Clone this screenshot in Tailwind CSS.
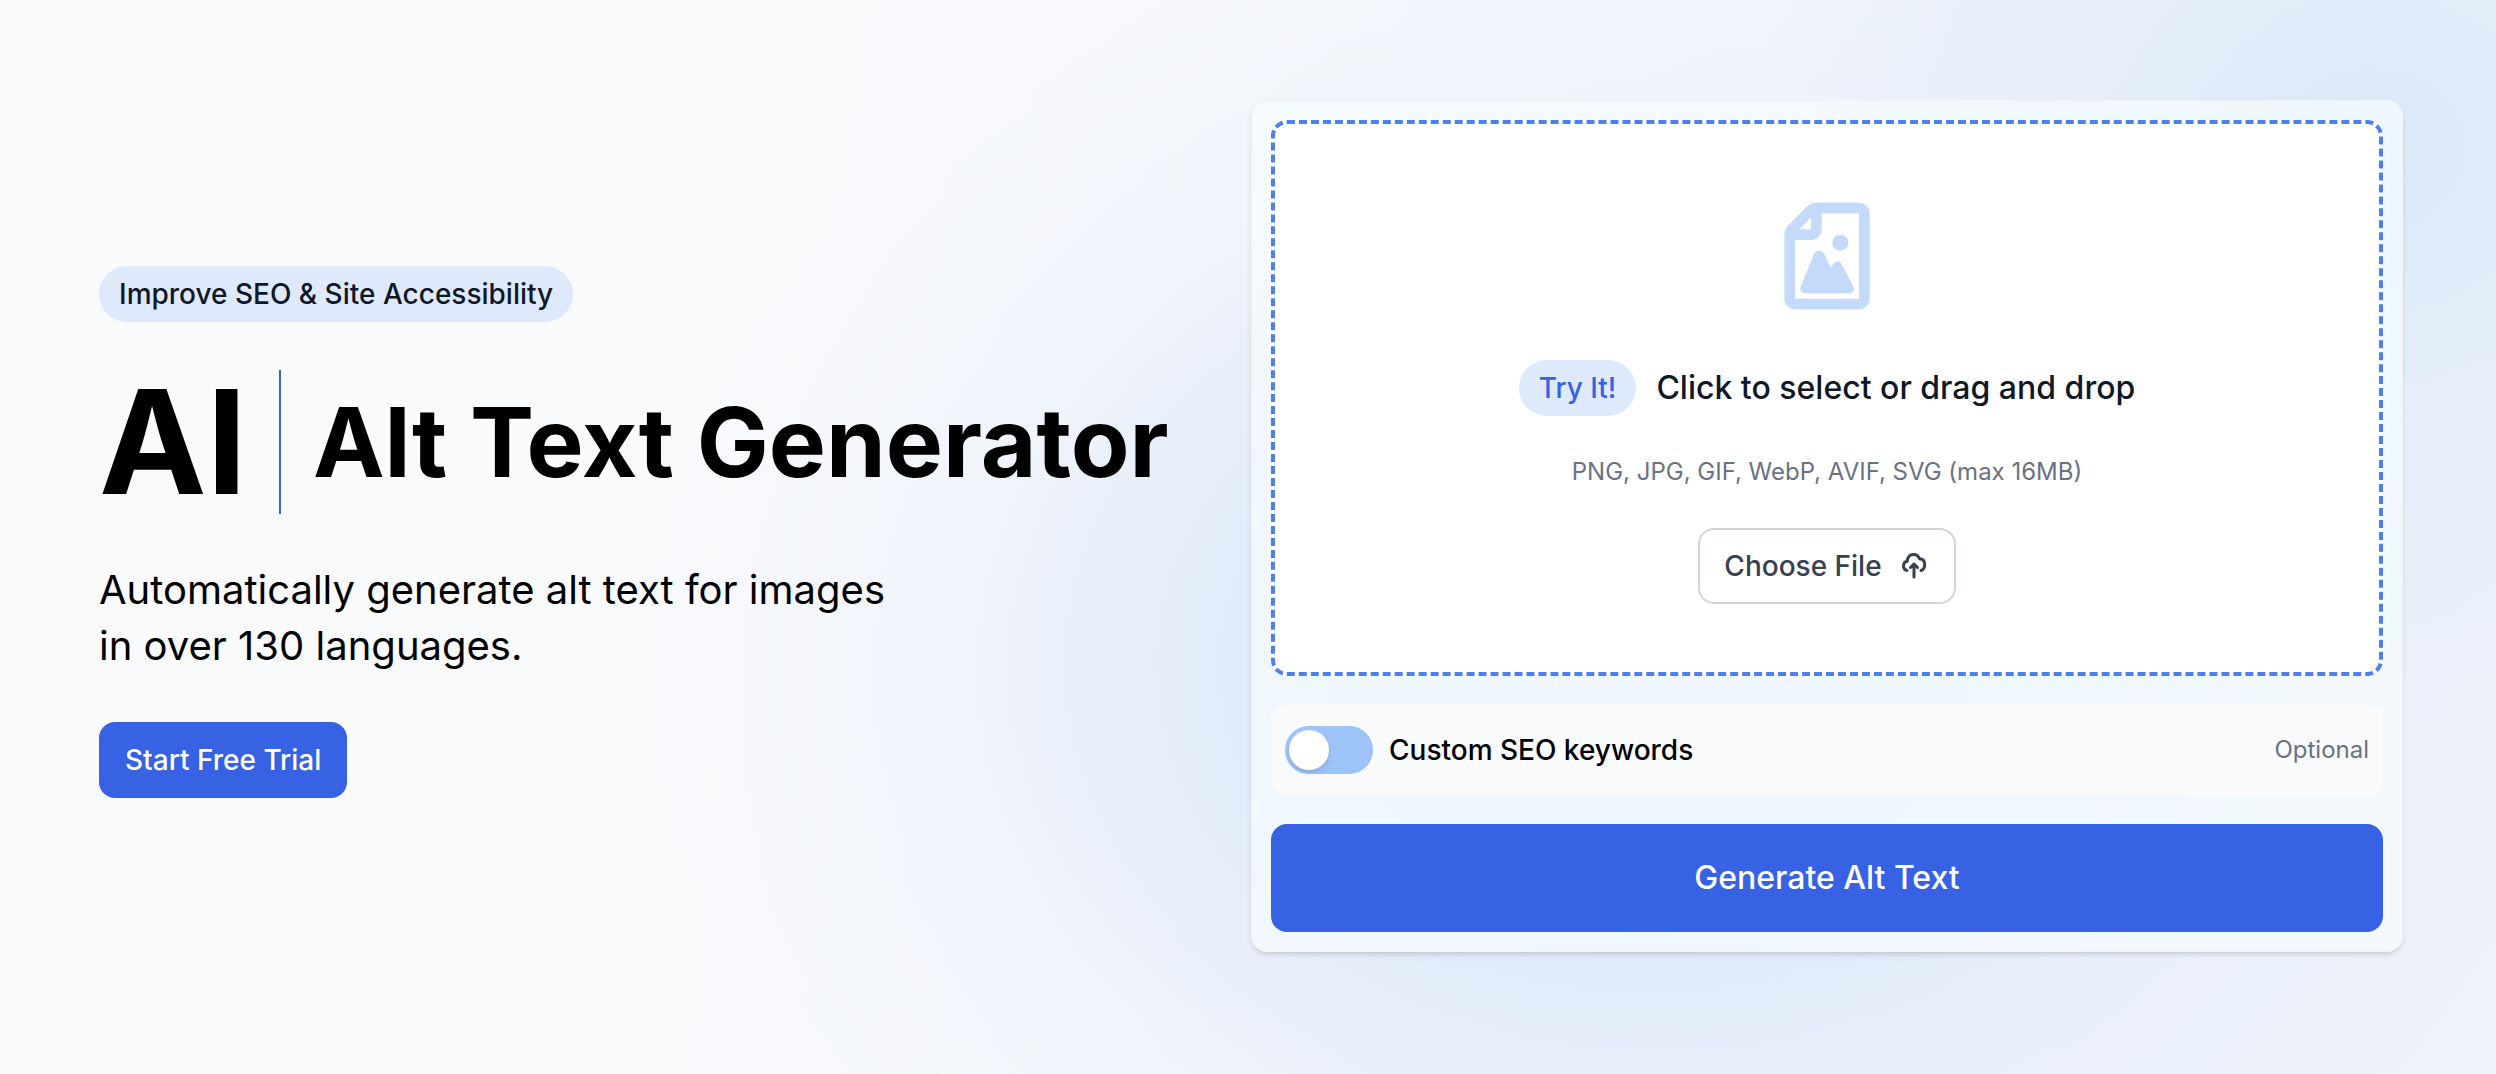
<!DOCTYPE html>
<html lang="en">
<head>
    <meta charset="UTF-8">
    <meta name="viewport" content="width=device-width, initial-scale=1.0">
    <title>AI Alt Text Generator</title>
    <script src="https://cdn.jsdelivr.net/npm/@tailwindcss/browser@4"></script>
</head>
<body class="bg-[#f9fafc] font-['Inter',sans-serif] text-black">
    <main class="min-h-screen pt-[100px] pb-[122px] pl-[99px] pr-[93px] bg-[radial-gradient(ellipse_620px_540px_at_95%_14%,#dae9f8_0%,#e0ebf9a0_45%,#e6eefa00_100%),radial-gradient(ellipse_1000px_760px_at_66%_62%,#dee9f8_0%,#e1ebf9_42%,#eaf0fa90_68%,#f9fafc00_100%),linear-gradient(100deg,#f9fafc_32%,#edf2fb_85%)]">
        <div class="grid grid-cols-2 items-center">
            <!-- Intro -->
            <section class="flex flex-col items-start gap-12 pt-3">
                <p class="rounded-full bg-[#dee9fc] px-5 py-2 text-[28px] leading-10 font-medium text-gray-900">Improve SEO &amp; Site Accessibility</p>
                <h1 class="flex items-center font-bold whitespace-nowrap">
                    <span class="border-r-2 border-[#3662e3] pr-8 text-[144px] leading-[144px]">AI</span>
                    <span class="pl-8 text-8xl leading-[96px]">Alt Text Generator</span>
                </h1>
                <p class="text-[40px] leading-14">Automatically generate alt text for images<br>in over 130 languages.</p>
                <a href="#" class="rounded-2xl bg-[#3662e3] px-[26px] py-[18px] text-[28px] leading-10 font-medium text-white hover:bg-blue-700">Start Free Trial</a>
            </section>

            <!-- Upload card -->
            <form class="flex flex-col gap-7 rounded-2xl border-2 border-gray-100 bg-[#f8fdff]/65 p-[18px] shadow-md">
                <div class="flex flex-col items-center gap-10 rounded-2xl border-4 border-dashed border-[#4d80ee] bg-white py-[68px]">
                    <svg class="size-32 text-[#c4dafb]" viewBox="0 0 24 24" fill="currentColor" aria-hidden="true">
                        <path fill-rule="evenodd" d="M18 2a2 2 0 0 1 2 2v16a2 2 0 0 1-2 2H6a2 2 0 0 1-2-2V7.830a2 2 0 0 1 .590-1.420l3.820-3.820A2 2 0 0 1 9.830 2zm0 2h-7v3a2 2 0 0 1-2 2H6v11h12zM9 4.830 6.830 7H9z"/>
                        <path d="M9.550 11.650c.4-.87 1.5-.87 1.920-.02l1.260 2.570.390-.670c.45-.7 1.250-.7 1.680.1l2.150 4.050c.35.7-.1 1.320-.8 1.320H8c-.75 0-1.200-.62-.93-1.320z"/>
                        <circle cx="14.5" cy="9.5" r="1.5"/>
                    </svg>
                    <div class="flex items-center gap-5">
                        <span class="rounded-full bg-[#dee9fc] px-5 py-2 text-[28px] leading-10 font-medium text-[#3662e3]">Try It!</span>
                        <span class="text-[32px] leading-10 font-medium text-gray-900">Click to select or drag and drop</span>
                    </div>
                    <p class="text-2xl text-gray-500">PNG, JPG, GIF, WebP, AVIF, SVG (max 16MB)</p>
                    <button type="button" class="flex items-center gap-4 rounded-2xl border-2 border-gray-300 bg-white px-6 py-4 text-[28px] leading-10 font-medium text-gray-700">
                        Choose File
                        <svg class="size-8" viewBox="0 0 32 32" fill="none" stroke="currentColor" stroke-width="3" stroke-linecap="round" stroke-linejoin="round" aria-hidden="true">
                            <path d="M9 20.500C7 20 5.500 18.300 5.500 16c0-2.600 1.700-4.300 3.700-4.700C9.700 7 12.300 4.500 15.500 4.500c3 0 5 1.600 6 4.300 3.300.2 5.200 2.500 5.200 5.600 0 3-1.400 5.300-3.700 6.100"/>
                            <path d="M16 27V15M12.500 17.500 16 14l3.500 3.500"/>
                        </svg>
                    </button>
                </div>

                <div class="flex items-center gap-4 rounded-2xl bg-[#f9fafc] px-[14px] py-[22px]">
                    <input id="keywords" type="checkbox" role="switch" class="flex h-12 w-22 appearance-none items-center rounded-full bg-[#9dc3f9] p-1 before:size-10 before:rounded-full before:bg-white before:shadow-md checked:bg-[#3662e3] checked:before:ml-10">
                    <label for="keywords" class="text-[28px] leading-10 font-medium">Custom SEO keywords</label>
                    <span class="ml-auto text-2xl text-gray-500">Optional</span>
                </div>

                <button type="submit" class="rounded-2xl bg-[#3662e3] py-[30px] text-[32px] leading-12 font-medium text-white hover:bg-blue-700">Generate Alt Text</button>
            </form>
        </div>
    </main>
</body>
</html>
